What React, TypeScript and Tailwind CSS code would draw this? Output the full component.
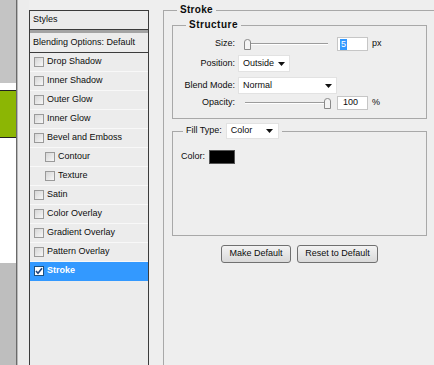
import React from "react";

function Box({ checked }: { checked?: boolean }) {
  return (
    <span
      className={`w-[10px] h-[10px] shrink-0 border flex items-center justify-center ${
        checked
          ? "bg-white border-[#1c5180]"
          : "border-[#9a9a9a] bg-linear-to-br from-[#d6d6d6] to-[#f7f7f7]"
      }`}
    >
      {checked && (
        <svg width="8" height="8" viewBox="0 0 8 8">
          <path d="M1 4 L3 6.3 L7 1.2" stroke="#21437a" strokeWidth="1.6" fill="none" />
        </svg>
      )}
    </span>
  );
}

function Thumb() {
  return (
    <svg width="7" height="11" viewBox="0 0 7 11">
      <path d="M0.5 3 Q0.5 0.5 3.5 0.5 Q6.5 0.5 6.5 3 V10.5 H0.5 Z" fill="#f4f4f4" stroke="#8a8a8a" />
    </svg>
  );
}

function Slider({ right }: { right?: boolean }) {
  return (
    <div className="relative w-[92px] h-[14px] flex items-center">
      <div className="ml-[7px] w-[83px] h-[2px] border-t border-[#9c9c9c] border-b border-b-white" />
      <div className={`absolute top-[2px] ${right ? "left-[86px]" : "left-[6px]"}`}>
        <Thumb />
      </div>
    </div>
  );
}

function Arrow() {
  return (
    <svg width="7" height="4" viewBox="0 0 7 4">
      <path d="M0 0 H7 L3.5 4 Z" fill="#111" />
    </svg>
  );
}

function Dropdown({ w, label }: { w: string; label: string }) {
  return (
    <div className={`${w} h-[17px] bg-white border border-[#e2e2e2] flex items-center justify-between pl-[4px] pr-[4px]`}>
      <span>{label}</span>
      <Arrow />
    </div>
  );
}

const items: [string, boolean, boolean?][] = [
  ["Drop Shadow", false],
  ["Inner Shadow", false],
  ["Outer Glow", false],
  ["Inner Glow", false],
  ["Bevel and Emboss", false],
  ["Contour", true],
  ["Texture", true],
  ["Satin", false],
  ["Color Overlay", false],
  ["Gradient Overlay", false],
  ["Pattern Overlay", false],
  ["Stroke", false, true],
];

export default function App() {
  return (
    <div className="w-[434px] h-[365px] overflow-hidden bg-[#eeeeee] flex font-['Liberation_Sans',Arial,sans-serif] text-[9px] text-[#0c0c0c]">
      {/* left strip */}
      <div className="w-[17px] h-full flex flex-col border-r border-[#6a6a6a]">
        <div className="h-[83px] bg-[#c4c4c4]" />
        <div className="h-[7px] bg-white" />
        <div className="h-[48px] bg-[#8cb604] border-y border-[#222]" />
        <div className="h-[125px] bg-white" />
        <div className="flex-1 bg-[#bebebe]" />
      </div>
      <div className="w-[12px] h-full bg-[#ececec] border-l border-[#b8b8b8]" />

      {/* styles list */}
      <div className="w-[120px] mt-[10px] border border-b-0 border-[#3c3c3c] bg-[#ececec] flex flex-col">
        <div className="h-[19px] border-b border-[#3c3c3c] flex items-center pl-[3px]">Styles</div>
        <div className="h-[3px] bg-[#a3a3a3]" />
        <div className="h-[20px] border-b border-[#3c3c3c] flex items-center pl-[3px]">
          Blending Options: Default
        </div>
        {items.map(([name, indent, sel]) => (
          <div
            key={name}
            className={`h-[19px] flex items-center gap-[3px] border-b ${
              sel ? "bg-[#3399ff] text-white font-bold border-[#3399ff]" : "border-[#f8f8f8]"
            } ${indent ? "pl-[15px]" : "pl-[4px]"}`}
          >
            <Box checked={sel} />
            <span>{name}</span>
          </div>
        ))}
      </div>

      {/* right panel */}
      <fieldset className="ml-[14px] mt-[4px] flex-1 min-w-0 border-t border-l border-[#a8a8a8]">
        <legend className="ml-[13px] px-[3px] font-bold text-[10px] leading-[12px] tracking-[0.3px]">Stroke</legend>
        <div className="pl-[8px] flex flex-col">
          <fieldset className="mt-[3px] w-[255px] border border-[#a8a8a8] pb-[8px]">
            <legend className="ml-[13px] px-[3px] font-bold text-[10px] leading-[12px] tracking-[0.5px]">Structure</legend>
            <div className="mt-[6px] h-[14px] flex items-center">
              <span className="w-[62px] text-right">Size:</span>
              <span className="w-[3px]" />
              <Slider />
              <div className="ml-[7px] w-[31px] h-[14px] bg-white border border-[#c6c6c6] flex items-center pl-[2px]">
                <span className="bg-[#3399ff] text-white px-[1px] leading-[11px]">5</span>
              </div>
              <span className="ml-[4px]">px</span>
            </div>
            <div className="mt-[4px] h-[17px] flex items-center">
              <span className="w-[62px] text-right">Position:</span>
              <span className="w-[3px]" />
              <Dropdown w="w-[52px]" label="Outside" />
            </div>
            <div className="mt-[5px] h-[17px] flex items-center">
              <span className="w-[62px] text-right">Blend Mode:</span>
              <span className="w-[3px]" />
              <Dropdown w="w-[99px]" label="Normal" />
            </div>
            <div className="mt-[2px] h-[14px] flex items-center">
              <span className="w-[62px] text-right">Opacity:</span>
              <span className="w-[3px]" />
              <Slider right />
              <div className="ml-[7px] w-[31px] h-[14px] bg-white border border-[#c6c6c6] flex items-center pl-[5px]">
                100
              </div>
              <span className="ml-[4px]">%</span>
            </div>
          </fieldset>

          <fieldset className="mt-[4px] w-[255px] h-[113px] border border-[#a8a8a8]">
            <legend className="ml-[10px] px-[3px] flex items-center gap-[4px]">
              <span>Fill Type:</span>
              <div className="w-[53px] h-[16px] bg-white border border-[#e2e2e2] flex items-center justify-between pl-[4px] pr-[5px]">
                <span>Color</span>
                <Arrow />
              </div>
            </legend>
            <div className="mt-[11px] pl-[8px] flex items-center gap-[4px]">
              <span>Color:</span>
              <div className="w-[26px] h-[14px] bg-black border border-[#555]" />
            </div>
          </fieldset>

          <div className="mt-[9px] w-[255px] flex justify-center gap-[6px]">
            <button className="w-[70px] h-[18px] rounded-[3px] border border-[#707070] bg-linear-to-b from-[#f3f3f3] to-[#d9d9d9] text-[9px]">
              Make Default
            </button>
            <button className="w-[81px] h-[18px] rounded-[3px] border border-[#707070] bg-linear-to-b from-[#f3f3f3] to-[#d9d9d9] text-[9px]">
              Reset to Default
            </button>
          </div>
        </div>
      </fieldset>
    </div>
  );
}
